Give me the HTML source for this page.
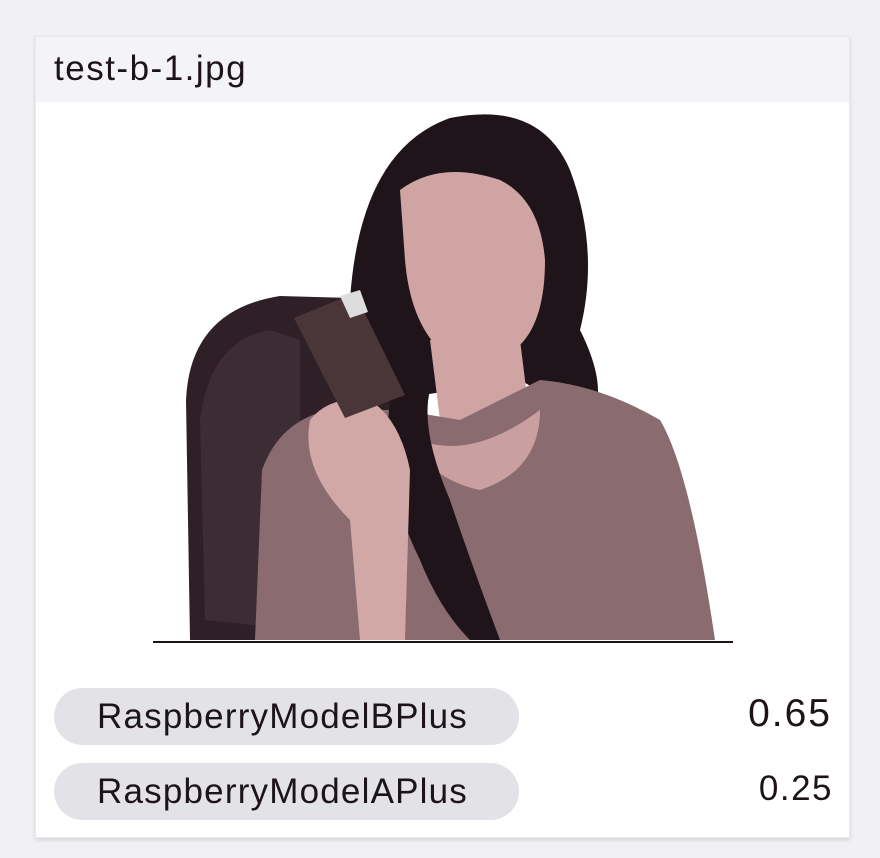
<!DOCTYPE html>
<html><head><meta charset="utf-8"><style>
body{margin:0;width:880px;height:858px;background:#f1f1f5;font-family:"Liberation Sans",sans-serif;position:relative;overflow:hidden}
.card{position:absolute;left:35px;top:36px;width:815px;height:802px;background:#fff;box-shadow:0 2px 4px rgba(0,0,0,.12);border:1px solid #e8e8ee;box-sizing:border-box}
.hdr{height:65px;background:#f4f4f8;font-size:35px;letter-spacing:1.5px;color:#1c1418;padding-left:18px;line-height:64px}
.pill{position:absolute;left:18px;width:465px;height:57px;border-radius:29px;background:#e3e3e7;font-size:35px;letter-spacing:1.2px;color:#1c1418;line-height:57px;padding-left:43px;box-sizing:border-box}
.val{position:absolute;right:18px;color:#1c1418}
svg{position:absolute;left:0;top:0}
</style></head><body>
<div class="card">
<div class="hdr">test-b-1.jpg</div>
<div class="pill" style="top:651px">RaspberryModelBPlus</div><div class="val" style="top:655px;font-size:39px;letter-spacing:2px;right:17px">0.65</div>
<div class="pill" style="top:726px">RaspberryModelAPlus</div><div class="val" style="top:732px;font-size:35px;letter-spacing:1.5px;right:16px">0.25</div>
</div>
<svg width="880" height="858">
<path d="M190 640 L186 400 Q190 310 280 296 L420 300 L420 640Z" fill="#2e2026"/>
<path d="M205 620 L200 420 Q210 340 270 330 L300 340 L300 630Z" fill="#3d2c33"/>
<path d="M350 300 Q360 150 450 118 Q540 100 570 170 Q600 250 580 330 Q610 390 590 420 L520 380 L390 400 Z" fill="#1f1419"/>
<path d="M400 190 Q440 160 500 180 Q540 200 545 260 Q545 320 520 345 Q480 375 440 350 Q410 320 405 260Z" fill="#cfa4a2"/>
<path d="M430 340 L520 340 L530 420 L440 420Z" fill="#cfa4a2"/>
<path d="M255 640 L262 470 Q280 420 330 410 L400 410 L460 420 L540 380 Q600 385 660 420 Q690 470 715 640Z" fill="#8a6c70"/>
<path d="M400 430 Q460 470 540 410 Q540 470 480 490 Q430 480 400 430Z" fill="#c9a09f"/>
<path d="M390 400 Q380 480 420 560 Q440 610 470 640 L500 640 Q470 560 450 500 Q420 430 430 390Z" fill="#1f1419"/>
<path d="M310 420 Q330 395 370 400 Q400 420 410 470 L405 640 L360 640 L350 520 Q300 470 310 420Z" fill="#d1a8a6"/>
<path d="M294 318 L355 293 L405 395 L345 418Z" fill="#4a3538"/>
<path d="M340 296 L360 290 L368 312 L350 318Z" fill="#ddd"/>
<rect x="153" y="641" width="580" height="2" fill="#1c1418"/>
</svg>
</body></html>
